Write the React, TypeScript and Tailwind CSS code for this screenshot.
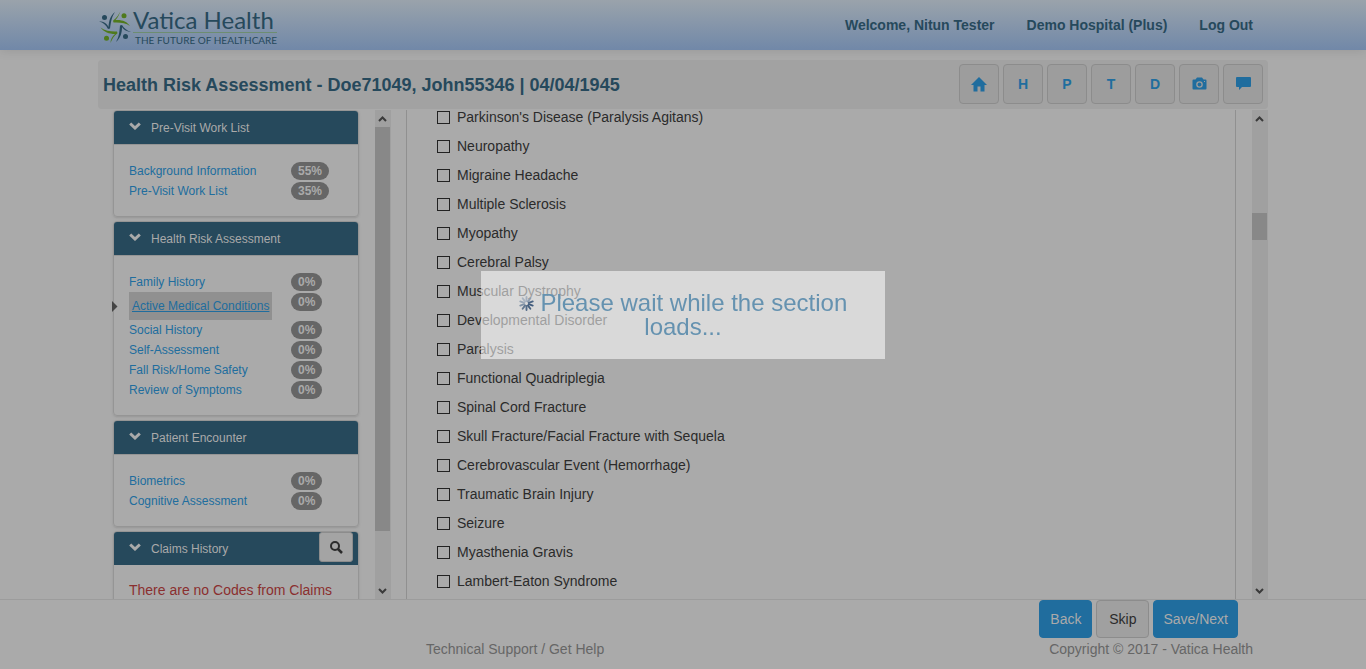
import React, { useState } from "react";
import clsx from "clsx";

type Item = { label: string; percent: string; active?: boolean };

const CONDITIONS = [
  "Parkinson's Disease (Paralysis Agitans)",
  "Neuropathy",
  "Migraine Headache",
  "Multiple Sclerosis",
  "Myopathy",
  "Cerebral Palsy",
  "Muscular Dystrophy",
  "Developmental Disorder",
  "Paralysis",
  "Functional Quadriplegia",
  "Spinal Cord Fracture",
  "Skull Fracture/Facial Fracture with Sequela",
  "Cerebrovascular Event (Hemorrhage)",
  "Traumatic Brain Injury",
  "Seizure",
  "Myasthenia Gravis",
  "Lambert-Eaton Syndrome",
];

const PANELS: { title: string; items: Item[] }[] = [
  {
    title: "Pre-Visit Work List",
    items: [
      { label: "Background Information", percent: "55%" },
      { label: "Pre-Visit Work List", percent: "35%" },
    ],
  },
  {
    title: "Health Risk Assessment",
    items: [
      { label: "Family History", percent: "0%" },
      { label: "Active Medical Conditions", percent: "0%", active: true },
      { label: "Social History", percent: "0%" },
      { label: "Self-Assessment", percent: "0%" },
      { label: "Fall Risk/Home Safety", percent: "0%" },
      { label: "Review of Symptoms", percent: "0%" },
    ],
  },
  {
    title: "Patient Encounter",
    items: [
      { label: "Biometrics", percent: "0%" },
      { label: "Cognitive Assessment", percent: "0%" },
    ],
  },
];

function LogoMark() {
  return (
    <svg width="34" height="34" viewBox="0 0 34 34" aria-hidden="true">
      <g fill="#26495c">
        <circle cx="6.500" cy="7.500" r="2.500" />
        <path d="M1 11.500C6 11.500 9 13.500 10.500 17C11 11 12 6 17 2C13.500 7 13 12 12 18.500L10 19C8 15 5.500 12.500 1 11.500Z" />
        <circle cx="27.500" cy="26.500" r="2.500" />
        <path d="M33 22C28 21.500 25.500 19.500 24 17C24 23 22.500 28 18 32C21 27 21.500 22 22 15.500L24 15C26 18 28.500 20.500 33 22Z" />
      </g>
      <g fill="#4f7a1c">
        <circle cx="26" cy="5.800" r="2.500" />
        <path d="M22.500 1C21 5 20 7.500 17.500 10C24 9.500 29 11.500 32 16C27.500 12.500 22 12.300 15.500 12.500L15 10.700C19 7.500 20.500 5 22.500 1Z" />
        <circle cx="8.500" cy="28.300" r="2.500" />
        <path d="M12.500 33C12.500 29.500 14 26.500 17 24C11 24 6 22 2.500 17.500C7.500 21 13 21.800 19 21.500L19.500 23.300C16 26 14 29 12.500 33Z" />
      </g>
    </svg>
  );
}

function HomeIcon() {
  return (
    <svg width="16" height="15" viewBox="0 0 16 15" fill="currentColor" aria-hidden="true">
      <path d="M8 0L16 8H13.500V14.500H9.500V9.500H6.500V14.500H2.500V8H0Z" />
    </svg>
  );
}

function CameraIcon() {
  return (
    <svg width="15" height="14" viewBox="0 0 15 14" fill="currentColor" aria-hidden="true">
      <path
        fillRule="evenodd"
        d="M5 .5H10L11.500 2.500H13.500Q14.500 2.500 14.500 3.500V11.500Q14.500 12.500 13.500 12.500H1.500Q.5 12.500 .5 11.500V3.500Q.5 2.500 1.500 2.500H3.500ZM7.500 4.200A3.300 3.300 0 1 0 7.500 10.800A3.300 3.300 0 1 0 7.500 4.200ZM7.500 5.500A2 2 0 1 1 7.500 9.500A2 2 0 1 1 7.500 5.500ZM12 4V5H13V4Z"
      />
    </svg>
  );
}

function CommentIcon() {
  return (
    <svg width="15" height="17" viewBox="0 0 15 17" fill="currentColor" aria-hidden="true">
      <path d="M1 1H14Q15 1 15 2V10Q15 11 14 11H6L3 14V11H1Q0 11 0 10V2Q0 1 1 1Z" />
    </svg>
  );
}

function ChevronIcon() {
  return (
    <svg className="mb-1" width="12" height="8" viewBox="0 0 12 8" aria-hidden="true">
      <path d="M1.200 1.500L6 6L10.800 1.500" fill="none" stroke="#aaaaaa" strokeWidth="3" />
    </svg>
  );
}

function SearchIcon() {
  return (
    <svg width="13" height="13" viewBox="0 0 13 13" fill="none" stroke="#2b2b2b" aria-hidden="true">
      <circle cx="5" cy="5" r="4" strokeWidth="2" />
      <path d="M8 8L12 12" strokeWidth="2.500" />
    </svg>
  );
}

function Spinner() {
  const colors = ["#a6b1bf", "#8d9db0", "#4a6382", "#3f5a7c", "#47617f", "#536b88", "#61778f", "#7f91a5", "#98a6b6", "#a9b4c1"];
  return (
    <svg className="inline-block align-baseline" width="15" height="15" viewBox="-8 -8 16 16" aria-hidden="true">
      {colors.map((c, i) => (
        <path key={i} d="M0 -2.500V-7" stroke={c} strokeWidth="2" strokeLinecap="round" transform={`rotate(${i * 36})`} />
      ))}
    </svg>
  );
}

function ScrollTrack({ children }: { children: React.ReactNode }) {
  return (
    <div className="flex w-4 shrink-0 flex-col bg-[#a0a0a0]" aria-hidden="true">
      <svg width="15" height="17" viewBox="0 0 15 17">
        <path d="M4 11L7.500 7.500L11 11" fill="none" stroke="#3a3a3a" strokeWidth="2" />
      </svg>
      <div className="flex min-h-0 flex-1 flex-col">{children}</div>
      <svg width="15" height="17" viewBox="0 0 15 17">
        <path d="M4 7L7.500 10.500L11 7" fill="none" stroke="#3a3a3a" strokeWidth="2" />
      </svg>
    </div>
  );
}

function Panel({ title, action, children }: { title: string; action?: React.ReactNode; children: React.ReactNode }) {
  return (
    <section className="shrink-0 rounded border border-[#959595] shadow-sm">
      <h2 className="flex h-[33px] items-center rounded-t-[3px] bg-[#26495c] pr-[5px] pl-[15px] text-[12px] text-[#aaaaaa]">
        <ChevronIcon />
        <span className="ml-2.5 flex-1">{title}</span>
        {action}
      </h2>
      {children}
    </section>
  );
}

function NavRow({ label, percent, active }: Item) {
  return (
    <li className={clsx("relative flex items-start", active ? "h-7" : "h-5")}>
      {active && (
        <svg className="absolute top-[9px] -left-[17px]" width="6" height="11" viewBox="0 0 6 11" aria-hidden="true">
          <path d="M0 0L5.500 5.500L0 11Z" fill="#444444" />
        </svg>
      )}
      <div className="w-[162px] whitespace-nowrap">
        <a
          href="#section"
          className={clsx(
            "block w-fit text-[12px] text-[#206d9e]",
            active ? "bg-[#909090] px-[3px] leading-7 underline" : "leading-5",
          )}
        >
          {label}
        </a>
      </div>
      <span className="mt-px rounded-full bg-[#666666] px-[7px] text-[12px] leading-[18px] font-bold text-[#aaaaaa]">
        {percent}
      </span>
    </li>
  );
}

function Condition({ label }: { label: string }) {
  const [checked, setChecked] = useState(false);
  return (
    <label className="flex h-[29px] items-center gap-[7px] text-[14px] text-[#2b2b2b]">
      <input
        type="checkbox"
        checked={checked}
        onChange={(e) => setChecked(e.target.checked)}
        className="size-[13px] appearance-none border border-[#222222] checked:bg-[#206d9e]"
      />
      {label}
    </label>
  );
}

export default function App() {
  const tool =
    "flex size-10 items-center justify-center rounded border border-[#8c8c8c] bg-[#9d9d9d] text-[14px] font-bold text-[#206d9e]";
  const action = "h-[38px] min-w-[53px] rounded border px-[9px] text-[14px]";
  return (
    <div className="flex h-screen flex-col overflow-hidden bg-[#aaaaaa] font-['Liberation_Sans',Arial,sans-serif]">
      <header className="h-[50px] shrink-0 bg-linear-to-b from-[#9aa3ab] to-[#7188a8] shadow-[0_1px_10px_rgba(0,0,0,0.1)]">
        <div className="mx-auto flex h-full max-w-[1170px] items-center justify-between pr-[15px]">
          <a href="#home" className="flex items-center gap-px pt-1 text-[#26495c]">
            <LogoMark />
            <span className="flex flex-col font-['Lato',sans-serif]">
              <span className="border-b border-[#6d8d71] text-[24px] leading-6">Vatica Health</span>
              <span className="pl-0.5 text-[10px] leading-[14px]">THE FUTURE OF HEALTHCARE</span>
            </span>
          </a>
          <nav className="flex gap-8 text-[14px] font-bold text-[#26495c]">
            <a href="#profile">Welcome, Nitun Tester</a>
            <a href="#hospital">Demo Hospital (Plus)</a>
            <a href="#logout">Log Out</a>
          </nav>
        </div>
      </header>

      <div className="mx-auto mt-2.5 flex w-full max-w-[1170px] shrink-0 items-center justify-between rounded bg-[#a2a2a2] px-[5px] pt-1 pb-[5px]">
        <h1 className="pt-0.5 text-[18px] font-bold text-[#26495c]">Health Risk Assessment - Doe71049, John55346 | 04/04/1945</h1>
        <div className="flex gap-1">
          <button className={tool} aria-label="Home"><HomeIcon /></button>
          <button className={tool}>H</button>
          <button className={tool}>P</button>
          <button className={tool}>T</button>
          <button className={tool}>D</button>
          <button className={tool} aria-label="Camera"><CameraIcon /></button>
          <button className={tool} aria-label="Comments"><CommentIcon /></button>
        </div>
      </div>

      <main className="mx-auto mt-px flex min-h-0 w-full max-w-[1170px] flex-1">
        <aside className="flex w-[293px] shrink-0 justify-between overflow-hidden pl-[15px]">
          <div className="flex w-[246px] flex-col gap-1">
            {PANELS.map((p) => (
              <Panel key={p.title} title={p.title}>
                <ul className="border-t border-[#959595] px-[15px] pt-4 pb-[15px]">
                  {p.items.map((i) => (
                    <NavRow key={i.label} {...i} />
                  ))}
                </ul>
              </Panel>
            ))}
            <Panel
              title="Claims History"
              action={
                <button
                  aria-label="Search claims"
                  className="mb-[3px] flex h-[30px] w-[34px] items-center justify-center rounded-[3px] border border-[#8c8c8c] bg-[#a4a4a4]"
                >
                  <SearchIcon />
                </button>
              }
            >
              <p className="px-[15px] py-[15px] text-[14px] leading-5 whitespace-nowrap text-[#8a2f2f]">
                There are no Codes from Claims
              </p>
            </Panel>
          </div>
          <ScrollTrack>
            <div className="w-[15px] grow-8 bg-[#888888]" />
            <div className="grow" />
          </ScrollTrack>
        </aside>
        <div className="ml-[15px] flex min-w-0 flex-1 justify-between gap-4 overflow-hidden">
          <form className="flex-1 border-x border-[#909090] pl-[30px]">
            <div className="-mt-[7px]">
              {CONDITIONS.map((c) => (
                <Condition key={c} label={c} />
              ))}
            </div>
          </form>
          <ScrollTrack>
            <div className="h-[19%]" />
            <div className="h-[27px] w-[15px] bg-[#888888]" />
          </ScrollTrack>
        </div>
      </main>

      <footer className="h-[70px] shrink-0 border-t border-[#9c9c9c]">
        <div className="mx-auto max-w-[1170px]">
          <div className="flex justify-end gap-1 pr-[30px]">
            <button className={clsx(action, "border-[#206d9e] bg-[#206d9e] text-[#aaaaaa]")}>Back</button>
            <button className={clsx(action, "border-[#8c8c8c] bg-[#a0a0a0] text-[#2b2b2b]")}>Skip</button>
            <button className={clsx(action, "border-[#206d9e] bg-[#206d9e] text-[#aaaaaa]")}>Save/Next</button>
          </div>
          <div className="flex justify-between pr-[15px] pl-[328px] text-[14px] leading-[22px] text-[#666666]">
            <a href="#support">Technical Support / Get Help</a>
            <span>Copyright © 2017 - Vatica Health</span>
          </div>
        </div>
      </footer>

      <div
        role="status"
        className="fixed inset-x-0 top-[271px] mx-auto w-[404px] bg-white/55 p-5 text-center text-[24px] leading-6 text-[#6592b0]"
      >
        <Spinner /> Please wait while the section loads...
      </div>
    </div>
  );
}
